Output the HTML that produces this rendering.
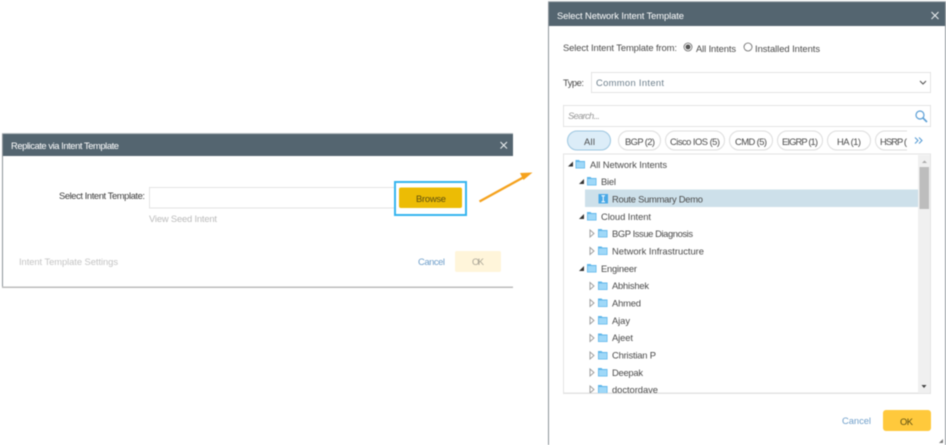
<!DOCTYPE html>
<html><head><meta charset="utf-8"><style>
html,body{margin:0;padding:0;background:#fff;width:946px;height:445px;overflow:hidden}
svg{display:block;filter:blur(.4px)}
text{font-family:"Liberation Sans",sans-serif;font-size:9.4px;fill:#4a4a4a}
</style></head><body>
<svg width="946" height="445" viewBox="0 0 946 445" xmlns="http://www.w3.org/2000/svg">
<defs>
<g id="f"><path d="M0 1.500h3.500l1 1H9.500v7.500H0z" fill="#5fb6ea"/><path d="M.8 3.500h8v5.800h-8z" fill="#9fd8f8"/></g>
<path id="o" d="M0 0l4 3.500l-4 3.500z" fill="#fff" stroke="#999" stroke-width=".9"/>
<path id="d" d="M5 0v5h-5z" fill="#333"/>
</defs>
<rect width="946" height="445" fill="#fff"/>

<!-- left dialog -->
<rect x="2" y="134" width="511" height="154" fill="#fff"/>
<rect x="2" y="133" width="511" height="1" fill="#b9bec2"/>
<rect x="2" y="134" width="1" height="154" fill="#8d9499"/>
<rect x="2" y="286.500" width="511" height="1.500" fill="#bcbcbc"/>
<rect x="3" y="134" width="510" height="22" fill="#546570"/>
<text x="11" y="149" textLength="108" lengthAdjust="spacing" style="fill:#fff">Replicate via Intent Template</text>
<path d="M500.500 142l6.500 6.500M507 142l-6.500 6.500" stroke="#e8ecee" stroke-width="1.100"/>
<text x="59" y="199" textLength="86" lengthAdjust="spacing" style="fill:#3c3c3c">Select Intent Template:</text>
<rect x="149.500" y="187.500" width="246" height="20.500" fill="#fff" stroke="#e3e3e3"/>
<text x="149" y="222" textLength="68" lengthAdjust="spacing" style="fill:#bbb">View Seed Intent</text>
<text x="19" y="265" textLength="99" lengthAdjust="spacing" style="fill:#c4c4c4">Intent Template Settings</text>
<rect x="395" y="182" width="71" height="33" fill="#fff" stroke="#35b5ee" stroke-width="2"/>
<rect x="399" y="187.500" width="63" height="20.500" rx="2" fill="#ecbc05"/>
<text x="416" y="202" textLength="30" lengthAdjust="spacing" style="fill:#5d4f10">Browse</text>
<text x="418" y="265" textLength="27" lengthAdjust="spacing" style="fill:#6f9fca">Cancel</text>
<rect x="455" y="251" width="46" height="21" rx="2" fill="#fff5da"/>
<text x="472" y="265" textLength="12" lengthAdjust="spacing" style="fill:#aaa596">OK</text>

<!-- arrow -->
<path d="M479.500 201.500L524 177" stroke="#f5a21d" stroke-width="2.300"/>
<path d="M532.500 172.500l-12.500 .5l3.500 7z" fill="#f5a21d"/>

<!-- right dialog -->
<rect x="548" y="2" width="397" height="443" fill="#fff"/>
<rect x="548" y="1" width="398" height="1" fill="#b9bec2"/>
<rect x="548" y="2" width="1" height="443" fill="#8d9499"/>
<rect x="945" y="2" width="1" height="443" fill="#8d9499"/>
<rect x="549" y="2" width="396" height="24" fill="#546570"/>
<text x="557" y="19" textLength="127" lengthAdjust="spacing" style="fill:#fff">Select Network Intent Template</text>
<path d="M931.500 12l7 7M938.500 12l-7 7" stroke="#e8ecee" stroke-width="1.100"/>

<text x="563" y="51" textLength="114" lengthAdjust="spacing">Select Intent Template from:</text>
<circle cx="688" cy="47" r="4" fill="#fff" stroke="#666" stroke-width=".8"/>
<circle cx="688" cy="47" r="2.500" fill="#555"/>
<text x="696" y="52" textLength="40" lengthAdjust="spacing">All Intents</text>
<circle cx="748" cy="47" r="4" fill="#fff" stroke="#666" stroke-width=".8"/>
<text x="755" y="52" textLength="65" lengthAdjust="spacing">Installed Intents</text>

<text x="563" y="86" textLength="21" lengthAdjust="spacing">Type:</text>
<rect x="591.500" y="72.500" width="339" height="20" fill="#fff" stroke="#e3e3e3"/>
<text x="596" y="86" textLength="68" lengthAdjust="spacing" style="fill:#6d7f8c">Common Intent</text>
<path d="M920 81l3 3l3-3" fill="none" stroke="#555" stroke-width="1.100"/>

<rect x="563.500" y="105.500" width="367" height="21" fill="#fff" stroke="#e3e3e3"/>
<text x="568" y="119" textLength="32" lengthAdjust="spacing" style="fill:#999;font-style:italic">Search...</text>
<circle cx="920" cy="115" r="4" fill="none" stroke="#5b9fd6" stroke-width="1.200"/>
<path d="M923 118l4 4" stroke="#5b9fd6" stroke-width="1.600"/>

<!-- pills -->
<rect x="567.500" y="131" width="43" height="19" rx="9.500" fill="#dcedf8" stroke="#9cc6e0"/>
<text x="584" y="145" textLength="11" lengthAdjust="spacing">All</text>
<rect x="618.500" y="131" width="42" height="19" rx="9.500" fill="#fff" stroke="#ddd"/>
<text x="625" y="145" textLength="30" lengthAdjust="spacing">BGP (2)</text>
<rect x="665.500" y="131" width="59" height="19" rx="9.500" fill="#fff" stroke="#ddd"/>
<text x="670" y="145" textLength="50" lengthAdjust="spacing">Cisco IOS (5)</text>
<rect x="729.500" y="131" width="43" height="19" rx="9.500" fill="#fff" stroke="#ddd"/>
<text x="735" y="145" textLength="32" lengthAdjust="spacing">CMD (5)</text>
<rect x="777.500" y="131" width="45" height="19" rx="9.500" fill="#fff" stroke="#ddd"/>
<text x="782" y="145" textLength="36" lengthAdjust="spacing">EIGRP (1)</text>
<rect x="827.500" y="131" width="43" height="19" rx="9.500" fill="#fff" stroke="#ddd"/>
<text x="837" y="145" textLength="24" lengthAdjust="spacing">HA (1)</text>
<path d="M907 131h-22a9.500 9.500 0 0 0 0 19h22" fill="#fff" stroke="#ddd"/>
<text x="880" y="145" textLength="27" lengthAdjust="spacing">HSRP (</text>
<path d="M915 137.500l3 3l-3 3M919 137.500l3 3l-3 3" fill="none" stroke="#5b9fd6" stroke-width="1.100"/>

<!-- tree -->
<rect x="563.500" y="154" width="367" height="239" fill="#fff" stroke="#e3e3e3"/>
<rect x="918" y="155" width="12" height="238" fill="#f0f0f0"/>
<rect x="919.500" y="167" width="9.500" height="42" fill="#bdbdbd"/>
<path d="M922 163l2.500-2.500l2.500 2.500z" fill="#aaa"/>
<path d="M921.500 385h5l-2.500 3z" fill="#444"/>
<rect x="585" y="189.500" width="333" height="17.500" fill="#cde0ea"/>

<use href="#d" x="568" y="161.500"/><use href="#f" x="575.500" y="158.500"/>
<text x="590" y="168" textLength="77" lengthAdjust="spacing">All Network Intents</text>

<use href="#d" x="579" y="179"/><use href="#f" x="587" y="175.500"/>
<text x="601" y="185" textLength="15" lengthAdjust="spacing">Biel</text>

<rect x="598.500" y="194" width="9.500" height="9.500" fill="#48a8e6"/>
<path d="M601.500 195.800h3.500M601.500 201.700h3.500M603.250 195.800v5.900" stroke="#fff" stroke-width="1" fill="none"/>
<text x="612" y="202.500" textLength="91" lengthAdjust="spacing">Route Summary Demo</text>

<use href="#d" x="579" y="214"/><use href="#f" x="587" y="210.500"/>
<text x="601" y="220" textLength="50" lengthAdjust="spacing">Cloud Intent</text>

<use href="#o" x="590" y="230"/><use href="#f" x="598" y="227.500"/>
<text x="612" y="237" textLength="81" lengthAdjust="spacing">BGP Issue Diagnosis</text>

<use href="#o" x="590" y="247.500"/><use href="#f" x="598" y="245"/>
<text x="612" y="254.500" textLength="92" lengthAdjust="spacing">Network Infrastructure</text>

<use href="#d" x="579" y="266"/><use href="#f" x="587" y="262.500"/>
<text x="601" y="272" textLength="36" lengthAdjust="spacing">Engineer</text>

<use href="#o" x="590" y="282.500"/><use href="#f" x="598" y="280"/>
<text x="612" y="289" textLength="37" lengthAdjust="spacing">Abhishek</text>

<use href="#o" x="590" y="299.500"/><use href="#f" x="598" y="297"/>
<text x="612" y="306.500" textLength="29" lengthAdjust="spacing">Ahmed</text>

<use href="#o" x="590" y="317"/><use href="#f" x="598" y="314.500"/>
<text x="612" y="324" textLength="18" lengthAdjust="spacing">Ajay</text>

<use href="#o" x="590" y="334.500"/><use href="#f" x="598" y="332"/>
<text x="612" y="341" textLength="21" lengthAdjust="spacing">Ajeet</text>

<use href="#o" x="590" y="352"/><use href="#f" x="598" y="349.500"/>
<text x="612" y="358.500" textLength="44" lengthAdjust="spacing">Christian P</text>

<use href="#o" x="590" y="369"/><use href="#f" x="598" y="366.500"/>
<text x="612" y="376" textLength="31" lengthAdjust="spacing">Deepak</text>

<use href="#o" x="590" y="386"/><use href="#f" x="598" y="383.500"/>
<text x="612" y="393" textLength="46" lengthAdjust="spacing">doctordave</text>
<rect x="564" y="393.500" width="367" height="5" fill="#fff"/>
<rect x="563" y="393" width="368" height="1" fill="#e3e3e3"/>

<text x="842" y="424" textLength="29" lengthAdjust="spacing" style="fill:#6f9fca">Cancel</text>
<rect x="883" y="410" width="48" height="21" rx="3" fill="#ffc93c"/>
<text x="900" y="425" textLength="13" lengthAdjust="spacing" style="fill:#5d4f10">OK</text>
<path d="M943 439v4h-4z" fill="#777"/>
</svg>
</body></html>
